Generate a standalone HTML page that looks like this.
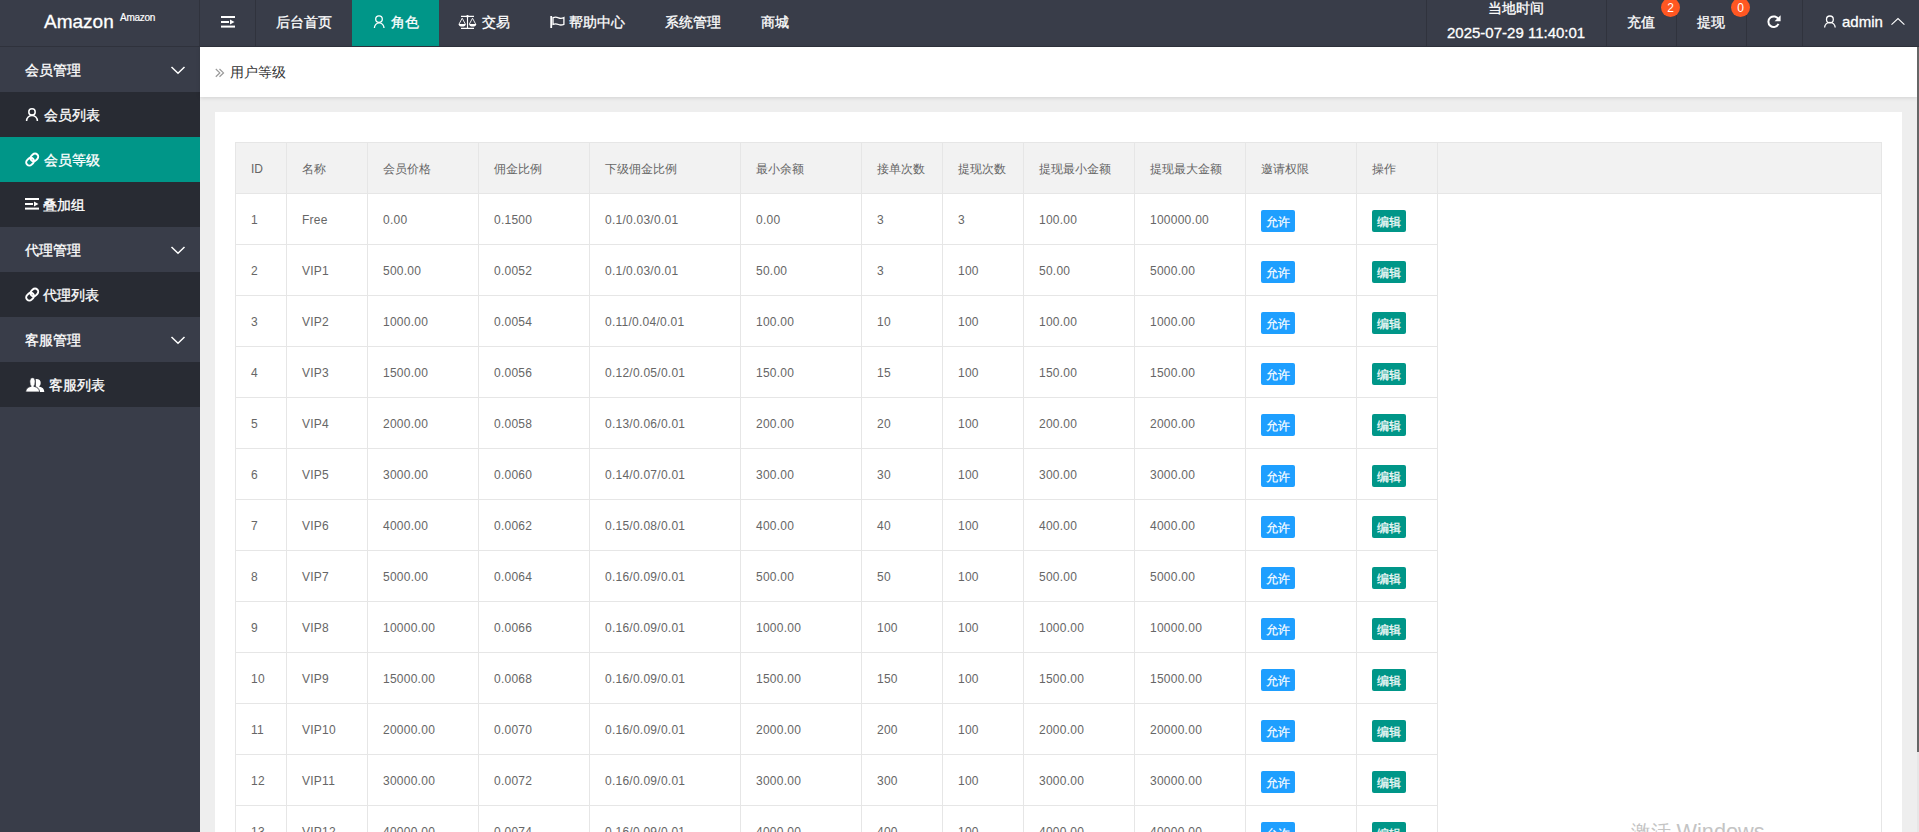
<!DOCTYPE html>
<html><head><meta charset="utf-8">
<style>
*{margin:0;padding:0;box-sizing:border-box}
html,body{width:1919px;height:832px;overflow:hidden;background:#eee;font-family:"Liberation Sans",sans-serif;position:relative}
.a{position:absolute;white-space:nowrap}
svg{position:absolute;overflow:visible}
.hdr{position:absolute;left:0;top:0;width:1919px;height:47px;background:#393D49;border-bottom:1px solid #2f323c}
.sep{position:absolute;top:0;width:1px;height:46px;background:#30333d}
.w14{font-size:14px;color:#fff;line-height:20px;-webkit-text-stroke:0.3px #fff}
.side{position:absolute;left:0;top:47px;width:200px;height:785px;background:#393D49;}
.side .c{position:absolute;left:0;width:200px;height:45px;background:#282B33}
.side .c.on{background:#009688}
.bc{position:absolute;left:200px;top:47px;width:1717px;height:50px;background:#fff;box-shadow:0 1px 4px rgba(0,0,0,.12)}
.card{position:absolute;left:215px;top:112px;width:1687px;height:760px;background:#fff;}
.tb{position:absolute;border:1px solid #e6e6e6;border-bottom:none}
.th{position:absolute;background:#f2f2f2}
.vl{position:absolute;width:1px;background:#e6e6e6}
.hl{position:absolute;height:1px;background:#e6e6e6}
.tt{position:absolute;font-size:12px;color:#666;line-height:52px;height:50px;white-space:nowrap;letter-spacing:0.25px}
.tt.h{letter-spacing:0}
.btn{position:absolute;width:34px;height:22px;line-height:24px;font-size:12px;color:#fff;text-align:center;border-radius:2px;-webkit-text-stroke:0.2px #fff}
.b1{background:#1E9FFF}
.b2{background:#009688}
.sb{position:absolute;left:1917px;top:47px;width:2px;height:785px;background:#e6e6e6}
.sb i{position:absolute;left:0;top:0;width:2px;height:705px;background:#666}
.badge{position:absolute;width:19px;height:19px;border-radius:50%;background:#FF5722;color:#fff;font-size:12px;line-height:21px;text-align:center}
</style></head><body>
<div class="hdr"></div>
<div class="sep" style="left:199px"></div>
<div class="sep" style="left:255px"></div>
<div class="sep" style="left:1426px"></div>
<div class="sep" style="left:1606px"></div>
<div class="sep" style="left:1676px"></div>
<div class="sep" style="left:1746px"></div>
<div class="sep" style="left:1802px"></div>
<div class="a" style="left:44px;top:9.5px;font-size:19px;color:#fff;line-height:24px;-webkit-text-stroke:0.3px #fff">Amazon</div>
<div class="a" style="left:120px;top:12px;font-size:10px;letter-spacing:-0.25px;color:#fff;line-height:12px;-webkit-text-stroke:0.2px #fff">Amazon</div>
<!-- top nav -->
<svg style="left:0;top:0" width="1" height="1"><g fill="#fff">
<rect x="221" y="16" width="14" height="2"/><rect x="221" y="21" width="8" height="2"/><path d="M230 19.5 L234.5 22 L230 24.5Z"/><rect x="221" y="25.6" width="14" height="2"/>
</g></svg>
<div style="position:absolute;left:352px;top:0;width:87px;height:46px;background:#009688"></div>
<div class="a w14" style="left:276px;top:12px">后台首页</div>
<svg style="left:0;top:0" width="1" height="1"><g fill="none" stroke="#fff" stroke-width="1.3">
<circle cx="379" cy="19.1" r="3.3"/><path d="M374.4 28 A4.8 5.2 0 0 1 384 28"/></g></svg>
<div class="a w14" style="left:391px;top:12px">角色</div>
<svg style="left:0;top:0" width="1" height="1"><g fill="#fff" stroke="#fff">
<path d="M461 16.4 H474 M467.5 16.4 V28.4 M461 28.4 H474" stroke-width="1.1" fill="none"/>
<circle cx="467.5" cy="16.3" r="1.2" stroke="none"/>
<path d="M462.2 18.2 L459 24.2 M462.2 18.2 L465.4 24.2 M472.5 18.2 L469.3 24.2 M472.5 18.2 L475.7 24.2" stroke-width="0.9" fill="none"/>
<path d="M458.6 24 H465.8 Q465.5 26.6 462.2 26.6 Q458.9 26.6 458.6 24Z M469.1 24 H476.3 Q476 26.6 472.7 26.6 Q469.4 26.6 469.1 24Z" stroke="none"/>
</g></svg>
<div class="a w14" style="left:482px;top:12px">交易</div>
<svg style="left:0;top:0" width="1" height="1"><g fill="none" stroke="#fff">
<path d="M551.2 16 V28" stroke-width="1.8"/>
<path d="M553 17.6 Q555.8 16.6 558.5 17.8 Q561 18.9 563.9 17.6 V24.3 Q561 25.6 558.5 24.5 Q555.8 23.3 553 24.3Z" stroke-width="1.3"/>
</g></svg>
<div class="a w14" style="left:569px;top:12px">帮助中心</div>
<div class="a w14" style="left:665px;top:12px">系统管理</div>
<div class="a w14" style="left:761px;top:12px">商城</div>
<!-- right header -->
<div class="a w14" style="left:1488px;top:-2px">当地时间</div>
<div class="a w14" style="left:1447px;top:22.5px;font-size:15px">2025-07-29 11:40:01</div>
<div class="a w14" style="left:1627px;top:12px">充值</div>
<div class="badge" style="left:1661px;top:-2px">2</div>
<div class="a w14" style="left:1697px;top:12px">提现</div>
<div class="badge" style="left:1731px;top:-2px">0</div>
<svg style="left:0;top:0" width="1" height="1"><g>
<path d="M1778.5 19.46 A5.3 5.3 0 1 0 1778.5 23.94" fill="none" stroke="#fff" stroke-width="2"/>
<path d="M1780.6 15.2 V21.2 H1774.6Z" fill="#fff"/>
</g></svg>
<svg style="left:0;top:0" width="1" height="1"><g fill="none" stroke="#fff" stroke-width="1.3">
<circle cx="1829.9" cy="19.4" r="3.4"/><path d="M1824.6 27.6 A5 5 0 0 1 1835.2 27.6"/>
<path d="M1891.5 24.6 L1898 18.6 L1904.4 24.6" stroke-width="1.1"/></g></svg>
<div class="a w14" style="left:1842px;top:12px;font-size:15px">admin</div>
<!-- side -->
<div class="side">
  <div class="c" style="top:45px"></div>
  <div class="c on" style="top:90px"></div>
  <div class="c" style="top:135px"></div>
  <div class="c" style="top:225px"></div>
  <div class="c" style="top:315px"></div>
</div>
<div class="a w14" style="left:25px;top:60px">会员管理</div>
<div class="a w14" style="left:44px;top:105px">会员列表</div>
<div class="a w14" style="left:44px;top:150px">会员等级</div>
<div class="a w14" style="left:43px;top:195px">叠加组</div>
<div class="a w14" style="left:25px;top:240px">代理管理</div>
<div class="a w14" style="left:43px;top:285px">代理列表</div>
<div class="a w14" style="left:25px;top:330px">客服管理</div>
<div class="a w14" style="left:49px;top:375px">客服列表</div>
<svg style="left:0;top:0" width="1" height="1"><g fill="none" stroke="#fff" stroke-width="1.5">
<path d="M171.5 67 L178 73.2 L184.5 67"/>
<path d="M171.5 247 L178 253.2 L184.5 247"/>
<path d="M171.5 337 L178 343.2 L184.5 337"/>
</g></svg>
<svg style="left:0;top:0" width="1" height="1"><g fill="none" stroke="#fff" stroke-width="1.5">
<circle cx="32" cy="111.9" r="3.2"/><path d="M26.6 121 A5.4 5.6 0 0 1 37.4 121"/></g></svg>
<svg style="left:0;top:0" width="1" height="1"><g fill="none" stroke="#fff" stroke-width="1.9" id="lk">
<g transform="translate(32.2 159.6) rotate(-45)">
<rect x="-1.2" y="-3.2" width="8.4" height="6.4" rx="3.2"/>
<rect x="-7.2" y="-3.2" width="8.4" height="6.4" rx="3.2"/>
</g></g></svg>
<svg style="left:0;top:0" width="1" height="1"><g fill="none" stroke="#fff" stroke-width="1.9">
<g transform="translate(32.2 294.6) rotate(-45)">
<rect x="-1.2" y="-3.2" width="8.4" height="6.4" rx="3.2"/>
<rect x="-7.2" y="-3.2" width="8.4" height="6.4" rx="3.2"/>
</g></g></svg>
<svg style="left:0;top:0" width="1" height="1"><g fill="#fff">
<rect x="25" y="198" width="14" height="2"/><rect x="25" y="203" width="8" height="2"/><path d="M34 201.5 L38.5 204 L34 206.5Z"/><rect x="25" y="207.6" width="14" height="2"/>
</g></svg>
<svg style="left:0;top:0" width="1" height="1"><g fill="#fff">
<path d="M35.6 378.9 Q40.7 378.6 40.7 383 Q40.7 386 39 386.6 Q44.3 387.6 44.3 392 H36 Z"/>
<path d="M32.5 377.7 Q35.2 377.7 35.2 381.8 Q35.2 385.2 33.8 386.3 Q39.4 387.4 39.6 392 H25.7 Q25.8 387.4 31.2 386.3 Q29.8 385.2 29.8 381.8 Q29.8 377.7 32.5 377.7Z" stroke="#282B33" stroke-width="0.8"/>
</g></svg>
<!-- body -->
<div class="bc"></div>
<svg style="left:0;top:0" width="1" height="1"><g fill="none" stroke="#999" stroke-width="1.2">
<path d="M215.8 69 L219.8 72.9 L215.8 76.8 M219.5 69 L223.5 72.9 L219.5 76.8"/></g></svg>
<div class="a" style="left:230px;top:62px;font-size:14px;color:#333;line-height:20px">用户等级</div>
<div class="card"></div>
<div class="tb" style="left:235px;top:142px;width:1647px;height:710px"></div>
<div class="th" style="left:236px;top:143px;width:1645px;height:50px"></div>
<div class="vl" style="left:286px;top:142px;height:690px"></div>
<div class="vl" style="left:367px;top:142px;height:690px"></div>
<div class="vl" style="left:478px;top:142px;height:690px"></div>
<div class="vl" style="left:589px;top:142px;height:690px"></div>
<div class="vl" style="left:740px;top:142px;height:690px"></div>
<div class="vl" style="left:861px;top:142px;height:690px"></div>
<div class="vl" style="left:942px;top:142px;height:690px"></div>
<div class="vl" style="left:1023px;top:142px;height:690px"></div>
<div class="vl" style="left:1134px;top:142px;height:690px"></div>
<div class="vl" style="left:1245px;top:142px;height:690px"></div>
<div class="vl" style="left:1356px;top:142px;height:690px"></div>
<div class="vl" style="left:1437px;top:142px;height:690px"></div>
<div class="hl" style="left:235px;top:193px;width:1647px"></div>
<div class="hl" style="left:235px;top:244px;width:1203px"></div>
<div class="hl" style="left:235px;top:295px;width:1203px"></div>
<div class="hl" style="left:235px;top:346px;width:1203px"></div>
<div class="hl" style="left:235px;top:397px;width:1203px"></div>
<div class="hl" style="left:235px;top:448px;width:1203px"></div>
<div class="hl" style="left:235px;top:499px;width:1203px"></div>
<div class="hl" style="left:235px;top:550px;width:1203px"></div>
<div class="hl" style="left:235px;top:601px;width:1203px"></div>
<div class="hl" style="left:235px;top:652px;width:1203px"></div>
<div class="hl" style="left:235px;top:703px;width:1203px"></div>
<div class="hl" style="left:235px;top:754px;width:1203px"></div>
<div class="hl" style="left:235px;top:805px;width:1203px"></div>
<div class="tt h" style="left:251px;top:143px">ID</div>
<div class="tt h" style="left:302px;top:143px">名称</div>
<div class="tt h" style="left:383px;top:143px">会员价格</div>
<div class="tt h" style="left:494px;top:143px">佣金比例</div>
<div class="tt h" style="left:605px;top:143px">下级佣金比例</div>
<div class="tt h" style="left:756px;top:143px">最小余额</div>
<div class="tt h" style="left:877px;top:143px">接单次数</div>
<div class="tt h" style="left:958px;top:143px">提现次数</div>
<div class="tt h" style="left:1039px;top:143px">提现最小金额</div>
<div class="tt h" style="left:1150px;top:143px">提现最大金额</div>
<div class="tt h" style="left:1261px;top:143px">邀请权限</div>
<div class="tt h" style="left:1372px;top:143px">操作</div>
<div class="tt" style="left:251px;top:194px">1</div>
<div class="tt" style="left:302px;top:194px">Free</div>
<div class="tt" style="left:383px;top:194px">0.00</div>
<div class="tt" style="left:494px;top:194px">0.1500</div>
<div class="tt" style="left:605px;top:194px">0.1/0.03/0.01</div>
<div class="tt" style="left:756px;top:194px">0.00</div>
<div class="tt" style="left:877px;top:194px">3</div>
<div class="tt" style="left:958px;top:194px">3</div>
<div class="tt" style="left:1039px;top:194px">100.00</div>
<div class="tt" style="left:1150px;top:194px">100000.00</div>
<div class="btn b1" style="left:1261px;top:210px">允许</div>
<div class="btn b2" style="left:1372px;top:210px">编辑</div>
<div class="tt" style="left:251px;top:245px">2</div>
<div class="tt" style="left:302px;top:245px">VIP1</div>
<div class="tt" style="left:383px;top:245px">500.00</div>
<div class="tt" style="left:494px;top:245px">0.0052</div>
<div class="tt" style="left:605px;top:245px">0.1/0.03/0.01</div>
<div class="tt" style="left:756px;top:245px">50.00</div>
<div class="tt" style="left:877px;top:245px">3</div>
<div class="tt" style="left:958px;top:245px">100</div>
<div class="tt" style="left:1039px;top:245px">50.00</div>
<div class="tt" style="left:1150px;top:245px">5000.00</div>
<div class="btn b1" style="left:1261px;top:261px">允许</div>
<div class="btn b2" style="left:1372px;top:261px">编辑</div>
<div class="tt" style="left:251px;top:296px">3</div>
<div class="tt" style="left:302px;top:296px">VIP2</div>
<div class="tt" style="left:383px;top:296px">1000.00</div>
<div class="tt" style="left:494px;top:296px">0.0054</div>
<div class="tt" style="left:605px;top:296px">0.11/0.04/0.01</div>
<div class="tt" style="left:756px;top:296px">100.00</div>
<div class="tt" style="left:877px;top:296px">10</div>
<div class="tt" style="left:958px;top:296px">100</div>
<div class="tt" style="left:1039px;top:296px">100.00</div>
<div class="tt" style="left:1150px;top:296px">1000.00</div>
<div class="btn b1" style="left:1261px;top:312px">允许</div>
<div class="btn b2" style="left:1372px;top:312px">编辑</div>
<div class="tt" style="left:251px;top:347px">4</div>
<div class="tt" style="left:302px;top:347px">VIP3</div>
<div class="tt" style="left:383px;top:347px">1500.00</div>
<div class="tt" style="left:494px;top:347px">0.0056</div>
<div class="tt" style="left:605px;top:347px">0.12/0.05/0.01</div>
<div class="tt" style="left:756px;top:347px">150.00</div>
<div class="tt" style="left:877px;top:347px">15</div>
<div class="tt" style="left:958px;top:347px">100</div>
<div class="tt" style="left:1039px;top:347px">150.00</div>
<div class="tt" style="left:1150px;top:347px">1500.00</div>
<div class="btn b1" style="left:1261px;top:363px">允许</div>
<div class="btn b2" style="left:1372px;top:363px">编辑</div>
<div class="tt" style="left:251px;top:398px">5</div>
<div class="tt" style="left:302px;top:398px">VIP4</div>
<div class="tt" style="left:383px;top:398px">2000.00</div>
<div class="tt" style="left:494px;top:398px">0.0058</div>
<div class="tt" style="left:605px;top:398px">0.13/0.06/0.01</div>
<div class="tt" style="left:756px;top:398px">200.00</div>
<div class="tt" style="left:877px;top:398px">20</div>
<div class="tt" style="left:958px;top:398px">100</div>
<div class="tt" style="left:1039px;top:398px">200.00</div>
<div class="tt" style="left:1150px;top:398px">2000.00</div>
<div class="btn b1" style="left:1261px;top:414px">允许</div>
<div class="btn b2" style="left:1372px;top:414px">编辑</div>
<div class="tt" style="left:251px;top:449px">6</div>
<div class="tt" style="left:302px;top:449px">VIP5</div>
<div class="tt" style="left:383px;top:449px">3000.00</div>
<div class="tt" style="left:494px;top:449px">0.0060</div>
<div class="tt" style="left:605px;top:449px">0.14/0.07/0.01</div>
<div class="tt" style="left:756px;top:449px">300.00</div>
<div class="tt" style="left:877px;top:449px">30</div>
<div class="tt" style="left:958px;top:449px">100</div>
<div class="tt" style="left:1039px;top:449px">300.00</div>
<div class="tt" style="left:1150px;top:449px">3000.00</div>
<div class="btn b1" style="left:1261px;top:465px">允许</div>
<div class="btn b2" style="left:1372px;top:465px">编辑</div>
<div class="tt" style="left:251px;top:500px">7</div>
<div class="tt" style="left:302px;top:500px">VIP6</div>
<div class="tt" style="left:383px;top:500px">4000.00</div>
<div class="tt" style="left:494px;top:500px">0.0062</div>
<div class="tt" style="left:605px;top:500px">0.15/0.08/0.01</div>
<div class="tt" style="left:756px;top:500px">400.00</div>
<div class="tt" style="left:877px;top:500px">40</div>
<div class="tt" style="left:958px;top:500px">100</div>
<div class="tt" style="left:1039px;top:500px">400.00</div>
<div class="tt" style="left:1150px;top:500px">4000.00</div>
<div class="btn b1" style="left:1261px;top:516px">允许</div>
<div class="btn b2" style="left:1372px;top:516px">编辑</div>
<div class="tt" style="left:251px;top:551px">8</div>
<div class="tt" style="left:302px;top:551px">VIP7</div>
<div class="tt" style="left:383px;top:551px">5000.00</div>
<div class="tt" style="left:494px;top:551px">0.0064</div>
<div class="tt" style="left:605px;top:551px">0.16/0.09/0.01</div>
<div class="tt" style="left:756px;top:551px">500.00</div>
<div class="tt" style="left:877px;top:551px">50</div>
<div class="tt" style="left:958px;top:551px">100</div>
<div class="tt" style="left:1039px;top:551px">500.00</div>
<div class="tt" style="left:1150px;top:551px">5000.00</div>
<div class="btn b1" style="left:1261px;top:567px">允许</div>
<div class="btn b2" style="left:1372px;top:567px">编辑</div>
<div class="tt" style="left:251px;top:602px">9</div>
<div class="tt" style="left:302px;top:602px">VIP8</div>
<div class="tt" style="left:383px;top:602px">10000.00</div>
<div class="tt" style="left:494px;top:602px">0.0066</div>
<div class="tt" style="left:605px;top:602px">0.16/0.09/0.01</div>
<div class="tt" style="left:756px;top:602px">1000.00</div>
<div class="tt" style="left:877px;top:602px">100</div>
<div class="tt" style="left:958px;top:602px">100</div>
<div class="tt" style="left:1039px;top:602px">1000.00</div>
<div class="tt" style="left:1150px;top:602px">10000.00</div>
<div class="btn b1" style="left:1261px;top:618px">允许</div>
<div class="btn b2" style="left:1372px;top:618px">编辑</div>
<div class="tt" style="left:251px;top:653px">10</div>
<div class="tt" style="left:302px;top:653px">VIP9</div>
<div class="tt" style="left:383px;top:653px">15000.00</div>
<div class="tt" style="left:494px;top:653px">0.0068</div>
<div class="tt" style="left:605px;top:653px">0.16/0.09/0.01</div>
<div class="tt" style="left:756px;top:653px">1500.00</div>
<div class="tt" style="left:877px;top:653px">150</div>
<div class="tt" style="left:958px;top:653px">100</div>
<div class="tt" style="left:1039px;top:653px">1500.00</div>
<div class="tt" style="left:1150px;top:653px">15000.00</div>
<div class="btn b1" style="left:1261px;top:669px">允许</div>
<div class="btn b2" style="left:1372px;top:669px">编辑</div>
<div class="tt" style="left:251px;top:704px">11</div>
<div class="tt" style="left:302px;top:704px">VIP10</div>
<div class="tt" style="left:383px;top:704px">20000.00</div>
<div class="tt" style="left:494px;top:704px">0.0070</div>
<div class="tt" style="left:605px;top:704px">0.16/0.09/0.01</div>
<div class="tt" style="left:756px;top:704px">2000.00</div>
<div class="tt" style="left:877px;top:704px">200</div>
<div class="tt" style="left:958px;top:704px">100</div>
<div class="tt" style="left:1039px;top:704px">2000.00</div>
<div class="tt" style="left:1150px;top:704px">20000.00</div>
<div class="btn b1" style="left:1261px;top:720px">允许</div>
<div class="btn b2" style="left:1372px;top:720px">编辑</div>
<div class="tt" style="left:251px;top:755px">12</div>
<div class="tt" style="left:302px;top:755px">VIP11</div>
<div class="tt" style="left:383px;top:755px">30000.00</div>
<div class="tt" style="left:494px;top:755px">0.0072</div>
<div class="tt" style="left:605px;top:755px">0.16/0.09/0.01</div>
<div class="tt" style="left:756px;top:755px">3000.00</div>
<div class="tt" style="left:877px;top:755px">300</div>
<div class="tt" style="left:958px;top:755px">100</div>
<div class="tt" style="left:1039px;top:755px">3000.00</div>
<div class="tt" style="left:1150px;top:755px">30000.00</div>
<div class="btn b1" style="left:1261px;top:771px">允许</div>
<div class="btn b2" style="left:1372px;top:771px">编辑</div>
<div class="tt" style="left:251px;top:806px">13</div>
<div class="tt" style="left:302px;top:806px">VIP12</div>
<div class="tt" style="left:383px;top:806px">40000.00</div>
<div class="tt" style="left:494px;top:806px">0.0074</div>
<div class="tt" style="left:605px;top:806px">0.16/0.09/0.01</div>
<div class="tt" style="left:756px;top:806px">4000.00</div>
<div class="tt" style="left:877px;top:806px">400</div>
<div class="tt" style="left:958px;top:806px">100</div>
<div class="tt" style="left:1039px;top:806px">4000.00</div>
<div class="tt" style="left:1150px;top:806px">40000.00</div>
<div class="btn b1" style="left:1261px;top:822px">允许</div>
<div class="btn b2" style="left:1372px;top:822px">编辑</div>
<div class="a" style="left:1631px;top:818px;font-size:20px;color:#c4c4c4;line-height:28px">激活 <span style="font-size:21.7px">Windows</span></div>
<div class="sb"><i></i></div>
</body></html>
